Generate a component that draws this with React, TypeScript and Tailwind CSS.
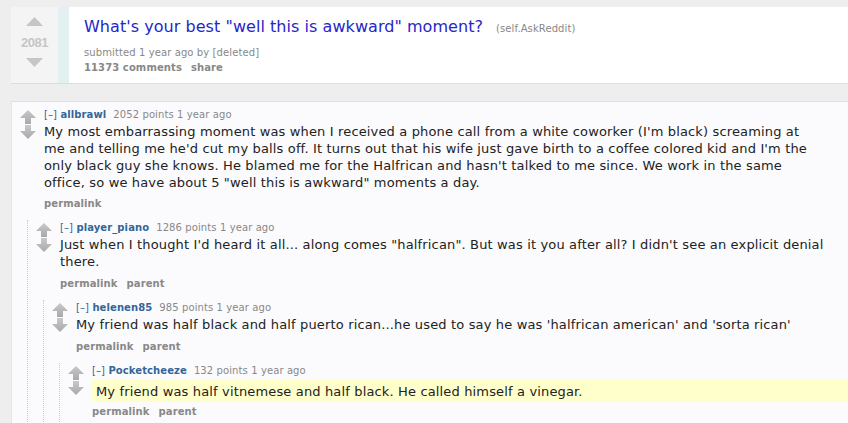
import React from "react";

const font = { fontFamily: '"DejaVu Sans", Verdana, sans-serif' };

function ArrowUp() {
  return (
    <svg width="16" height="14" viewBox="0 0 16 14">
      <defs>
        <linearGradient id="gu" x1="0" y1="0" x2="0" y2="1">
          <stop offset="0" stopColor="#c8c8c8" />
          <stop offset="1" stopColor="#a9a9a9" />
        </linearGradient>
      </defs>
      <path d="M8 0 L16 8 H11 V14 H5 V8 H0 Z" fill="url(#gu)" />
    </svg>
  );
}
function ArrowDown() {
  return (
    <svg width="16" height="14" viewBox="0 0 16 14">
      <defs>
        <linearGradient id="gd" x1="0" y1="0" x2="0" y2="1">
          <stop offset="0" stopColor="#c8c8c8" />
          <stop offset="1" stopColor="#a9a9a9" />
        </linearGradient>
      </defs>
      <path d="M8 14 L16 6 H11 V0 H5 V6 H0 Z" fill="url(#gd)" />
    </svg>
  );
}

function Votes() {
  return (
    <div className="flex flex-col w-[16px] shrink-0 mt-[1px]">
      <ArrowUp />
      <div className="h-[1px]" />
      <ArrowDown />
    </div>
  );
}

type C = {
  user: string;
  points: string;
  body: React.ReactNode;
  parent?: boolean;
  highlight?: boolean;
};

function Comment({ c, children, top }: { c: C; children?: React.ReactNode; top?: boolean }) {
  return (
    <div>
      <div className="flex gap-[8px]">
        <Votes />
        <div className="flex-1 min-w-0">
          <div className="text-[10px] leading-[12px] text-[#888] h-[14px] tracking-[0.1px]">
            <span className="text-[#369]">[–]</span>{" "}
            <span className="font-bold text-[#369]">{c.user}</span>
            <span className="ml-[7px]">{c.points} points 1 year ago</span>
          </div>
          <div
            className={
              "text-[13px] leading-[17px] text-[#222] tracking-[0.15px] " +
              (c.highlight ? "bg-[#ffffcc] -mr-[30px] pl-[4px] pt-[3px] pb-[2px] mt-[1px]" : "")
            }
          >
            {c.body}
          </div>
          <div
            className={
              "text-[10px] leading-[12px] font-bold text-[#888] pb-[10px] flex gap-[9px] tracking-[0.1px] " +
              (c.highlight ? "pt-[4px]" : top ? "pt-[7px]" : "pt-[8px]")
            }
          >
            <span>permalink</span>
            {c.parent && <span>parent</span>}
          </div>
        </div>
      </div>
      {children && (
        <div className="ml-[7px] border-l border-dotted border-[#ccc] pl-[8px] pt-[2px]">
          {children}
        </div>
      )}
    </div>
  );
}

export default function App() {
  return (
    <div className="bg-[#eeeeee] min-h-[423px] w-[848px] overflow-hidden pt-[7px] pl-[11px]" style={font}>
      {/* Post card */}
      <div className="flex h-[77px] bg-white border-b border-[#dddddd]">
        <div className="w-[47px] bg-[#f4f4f4] flex flex-col items-center pt-[10px]">
          <svg width="17" height="9" viewBox="0 0 17 9">
            <path d="M8.5 0 L17 9 H0 Z" fill="#c6c6c6" />
          </svg>
          <div className="text-[13px] font-bold text-[#c6c6c6] leading-[16px] mt-[9px] tracking-[-0.5px]" style={{ fontFamily: '"Liberation Sans", Arial, sans-serif' }}>
            2081
          </div>
          <svg width="17" height="9" viewBox="0 0 17 9" className="mt-[7px]">
            <path d="M8.5 9 L17 0 H0 Z" fill="#c6c6c6" />
          </svg>
        </div>
        <div className="w-[11px] bg-[#e2f0f1]" />
        <div className="pl-[15px] pt-[9px]">
          <div className="flex items-baseline">
            <span className="text-[16px] leading-[22px] text-[#2626c7] tracking-[0.05px]">
              What's your best "well this is awkward" moment?
            </span>
            <span className="text-[10px] text-[#888] ml-[13px] tracking-[0.1px]">(self.AskReddit)</span>
          </div>
          <div className="text-[10px] leading-[13px] text-[#888] mt-[8px] tracking-[0.1px]">
            submitted 1 year ago by [deleted]
          </div>
          <div className="text-[10px] leading-[13px] font-bold text-[#888] mt-[2px] flex gap-[9px] tracking-[0.1px]">
            <span>11373 comments</span>
            <span>share</span>
          </div>
        </div>
      </div>

      {/* Comments */}
      <div className="mt-[17px] bg-[#fbfbfd] border-t border-[#e0e0e0] border-l border-l-[#dbecee] pl-[8px] pr-[23px] pt-[7px] min-h-[330px]">
        <Comment
          top
          c={{
            user: "allbrawl",
            points: "2052",
            body: (
              <>
                My most embarrassing moment was when I received a phone call from a white coworker (I'm black) screaming at
                <br />
                me and telling me he'd cut my balls off. It turns out that his wife just gave birth to a coffee colored kid and I'm the only black guy she knows. He blamed me for the Halfrican and hasn't talked to me since. We work in the same office, so we have about 5 "well this is awkward" moments a day.
              </>
            ),
          }}
        >
          <Comment
            c={{
              user: "player_piano",
              points: "1286",
              parent: true,
              body: (
                <>
                  Just when I thought I'd heard it all... along comes "halfrican". But was it you after all? I didn't see an explicit denial there.
                </>
              ),
            }}
          >
            <Comment
              c={{
                user: "helenen85",
                points: "985",
                parent: true,
                body: (
                  <>
                    My friend was half black and half puerto rican...he used to say he was 'halfrican american' and 'sorta rican'
                  </>
                ),
              }}
            >
              <Comment
                c={{
                  user: "Pocketcheeze",
                  points: "132",
                  parent: true,
                  highlight: true,
                  body: <>My friend was half vitnemese and half black. He called himself a vinegar.</>,
                }}
              />
            </Comment>
          </Comment>
        </Comment>
      </div>
    </div>
  );
}
